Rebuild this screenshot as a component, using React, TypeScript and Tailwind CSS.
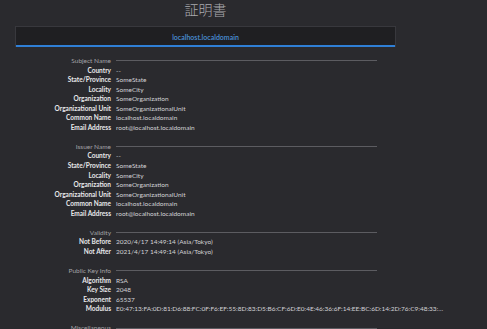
import React from "react";

type Row = [string, string];
type Section = { title: string; rows: Row[] };

const sections: Section[] = [
  {
    title: "Subject Name",
    rows: [
      ["Country", "--"],
      ["State/Province", "SomeState"],
      ["Locality", "SomeCity"],
      ["Organization", "SomeOrganization"],
      ["Organizational Unit", "SomeOrganizationalUnit"],
      ["Common Name", "localhost.localdomain"],
      ["Email Address", "root@localhost.localdomain"],
    ],
  },
  {
    title: "Issuer Name",
    rows: [
      ["Country", "--"],
      ["State/Province", "SomeState"],
      ["Locality", "SomeCity"],
      ["Organization", "SomeOrganization"],
      ["Organizational Unit", "SomeOrganizationalUnit"],
      ["Common Name", "localhost.localdomain"],
      ["Email Address", "root@localhost.localdomain"],
    ],
  },
  {
    title: "Validity",
    rows: [
      ["Not Before", "2020/4/17 14:49:14 (Asia/Tokyo)"],
      ["Not After", "2021/4/17 14:49:14 (Asia/Tokyo)"],
    ],
  },
  {
    title: "Public Key Info",
    rows: [
      ["Algorithm", "RSA"],
      ["Key Size", "2048"],
      ["Exponent", "65537"],
      [
        "Modulus",
        "E0:47:13:FA:0D:81:D6:88:FC:0F:F6:EF:55:8D:83:D5:B6:CF:6D:E0:4E:46:36:6F:14:EE:BC:6D:14:2D:76:C9:48:33:\u2026",
      ],
    ],
  },
  { title: "Miscellaneous", rows: [] },
];

export default function App() {
  return (
    <div
      className="h-screen w-full overflow-hidden bg-[#2a2a2e]"
      style={{ fontFamily: "Lato, 'Noto Sans', sans-serif" }}
    >
      <div className="ml-[15px] w-[381px]">
        <div
          className="flex h-[26px] items-start justify-center text-[14px] leading-[19px] font-light text-[#a9a9ad]"
          style={{ fontFamily: "'Noto Sans CJK JP', sans-serif" }}
        >
          証明書
        </div>
        <div className="flex h-[21px] items-center justify-center border border-b-0 border-[#38383d] bg-[#1f1f22] shadow-[inset_0_-2px_0_#2f7fd6]">
          <span className="text-[7px] font-semibold text-[#4a8fd6]">localhost.localdomain</span>
        </div>
        <div className="mt-[9px] flex flex-col gap-[9.55px] text-[6.5px] leading-[9.55px]">
          {sections.map((s) => (
            <div key={s.title} className="flex flex-col">
              <div className="grid grid-cols-[96px_1fr] gap-x-[5px] items-center">
                <div className="text-right text-[#a2a2a6]">{s.title}</div>
                <div className="mr-[19px] h-px bg-[#5c5c61]" />
              </div>
              {s.rows.map(([k, v]) => (
                <div key={k} className="grid grid-cols-[96px_1fr] gap-x-[5px]">
                  <div className="text-right font-bold text-[#e8e8ea]">{k}</div>
                  <div className="whitespace-nowrap text-[#d2d2d6]">{v}</div>
                </div>
              ))}
            </div>
          ))}
        </div>
      </div>
    </div>
  );
}
